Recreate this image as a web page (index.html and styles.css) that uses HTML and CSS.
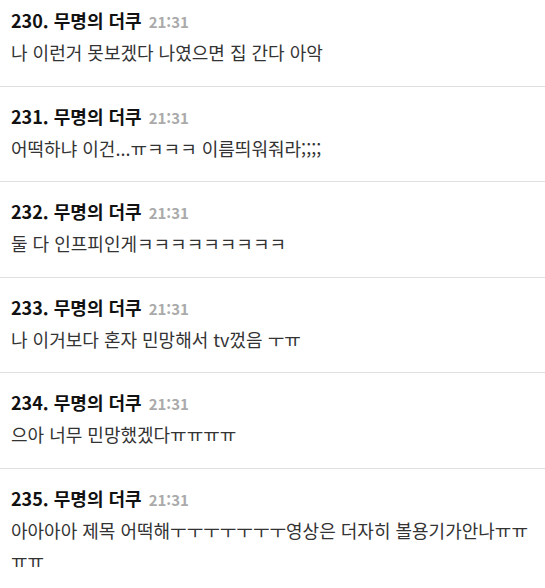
FILE: index.html
```html
<!DOCTYPE html>
<html lang="ko">
<head>
  <meta charset="UTF-8">
  <title>댓글</title>
  <link rel="stylesheet" href="styles.css">
</head>
<body>
  <div class="comments">
    <div class="comment">
      <div class="head">230. 무명의 더쿠 <span class="time">21:31</span></div>
      <div class="text">나 이런거 못보겠다 나였으면 집 간다 아악</div>
    </div>
    <div class="comment">
      <div class="head">231. 무명의 더쿠 <span class="time">21:31</span></div>
      <div class="text">어떡하냐 이건...ㅠㅋㅋㅋ 이름띄워줘라;;;;</div>
    </div>
    <div class="comment">
      <div class="head">232. 무명의 더쿠 <span class="time">21:31</span></div>
      <div class="text">둘 다 인프피인게ㅋㅋㅋㅋㅋㅋㅋㅋㅋ</div>
    </div>
    <div class="comment">
      <div class="head">233. 무명의 더쿠 <span class="time">21:31</span></div>
      <div class="text">나 이거보다 혼자 민망해서 tv껐음 ㅜㅠ</div>
    </div>
    <div class="comment">
      <div class="head">234. 무명의 더쿠 <span class="time">21:31</span></div>
      <div class="text">으아 너무 민망했겠다ㅠㅠㅠㅠ</div>
    </div>
    <div class="comment">
      <div class="head">235. 무명의 더쿠 <span class="time">21:31</span></div>
      <div class="text">아아아아 제목 어떡해ㅜㅜㅜㅜㅜㅜㅜ영상은 더자히 볼용기가안나ㅠㅠㅠㅠ</div>
    </div>
  </div>
</body>
</html>
```

FILE: styles.css
```css
body {
  margin: 0;
  background: #fff;
  font-family: "Noto Sans CJK KR", "Noto Sans", sans-serif;
}
.comments {
  width: 545px;
}
.comment {
  padding: 17px 6px 18.5px 11px;
  border-bottom: 1px solid #e0e0e0;
}
.comment:first-child {
  padding-top: 8px;
}
.head {
  font-size: 18px;
  font-weight: bold;
  line-height: 24px;
  color: #111;
}
.time {
  font-size: 15px;
  line-height: 1;
  color: #aaa;
  margin-left: 2px;
}
.text {
  margin-top: 5px;
  font-size: 18px;
  line-height: 30px;
  color: #333;
}
```
